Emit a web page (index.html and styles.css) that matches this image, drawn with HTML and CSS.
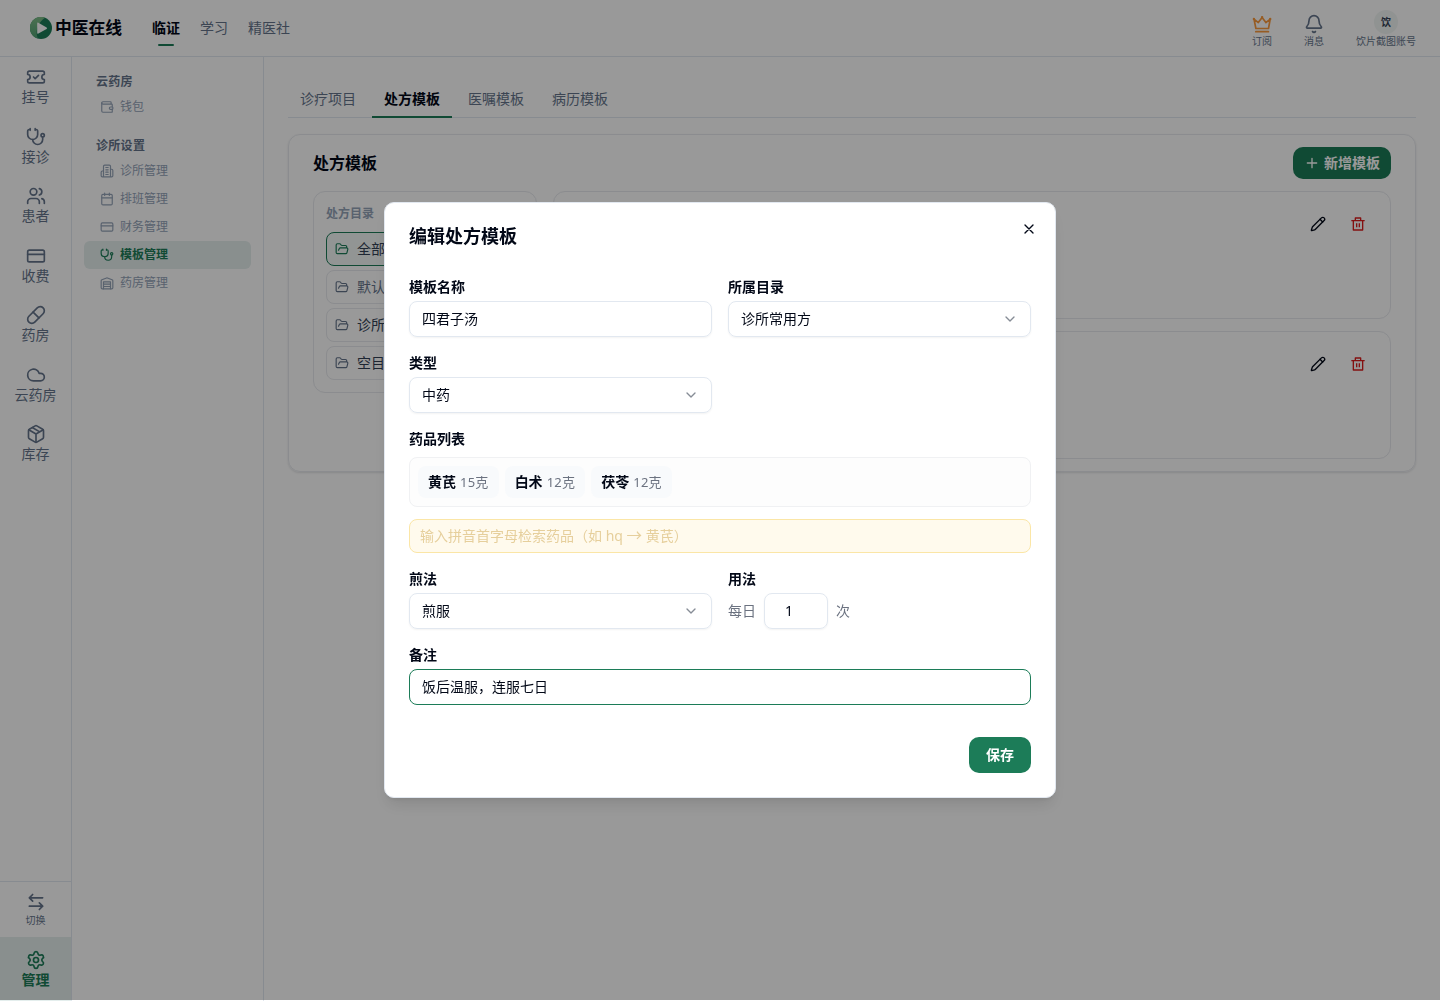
FILE: index.html
```html
<!DOCTYPE html>
<html lang="zh-CN">
<head>
<meta charset="utf-8">
<title>中医在线 - 模板管理</title>
<link rel="stylesheet" href="styles.css">
</head>
<body>
<svg class="sprite" aria-hidden="true">
  <symbol id="stethoscope" viewBox="0 0 24 24"><path d="M11 2v2M5 2v2M5 3H4a2 2 0 0 0-2 2v4a6 6 0 0 0 12 0V5a2 2 0 0 0-2-2h-1"/><path d="M8 15a6 6 0 0 0 12 0v-3"/><circle cx="20" cy="10" r="2"/></symbol>
  <symbol id="card" viewBox="0 0 24 24"><rect width="20" height="14" x="2" y="5" rx="2"/><path d="M2 10h20"/></symbol>
  <symbol id="folder" viewBox="0 0 24 24"><path d="m6 14 1.5-2.9A2 2 0 0 1 9.24 10H20a2 2 0 0 1 1.94 2.5l-1.54 6a2 2 0 0 1-1.95 1.5H4a2 2 0 0 1-2-2V5a2 2 0 0 1 2-2h3.9a2 2 0 0 1 1.69.9l.81 1.2a2 2 0 0 0 1.67.9H18a2 2 0 0 1 2 2v2"/></symbol>
  <symbol id="chevron" viewBox="0 0 24 24"><path d="m6 9 6 6 6-6"/></symbol>
  <symbol id="pencil" viewBox="0 0 24 24"><path d="M21.174 6.812a1 1 0 0 0-3.986-3.987L3.842 16.174a2 2 0 0 0-.5.83l-1.321 4.352a.5.5 0 0 0 .623.622l4.353-1.32a2 2 0 0 0 .83-.497z"/><path d="m15 5 4 4"/></symbol>
  <symbol id="trash" viewBox="0 0 24 24"><path d="M17 6H22V8H20V21C20 21.5523 19.5523 22 19 22H5C4.44772 22 4 21.5523 4 21V8H2V6H7V3C7 2.44772 7.44772 2 8 2H16C16.5523 2 17 2.44772 17 3V6ZM18 8H6V20H18V8ZM9 11H11V17H9V11ZM13 11H15V17H13V11ZM9 4V6H15V4H9Z"/></symbol>
</svg>

<div class="app">
  <header class="topbar">
    <div class="brand">
      <svg class="brand-mark" viewBox="0 0 22 22"><defs><linearGradient id="leaf" x1="0" y1="0" x2="0" y2="1"><stop offset="0" stop-color="#7fbd87"/><stop offset="1" stop-color="#4e9f72"/></linearGradient></defs><circle cx="11" cy="11" r="11" fill="#1c7c58"/><path d="M15 .8A11 11 0 1 0 8 21.6C5 16 7 6 15 .8Z" fill="url(#leaf)"/><path d="M7.2 6.4v9.4q0 1.3 1.2.7l8.2-4.6q1.1-.7 0-1.4L8.4 5.7q-1.2-.6-1.2.7Z" fill="#fff"/></svg>
      <span class="brand-name">中医在线</span>
    </div>
    <nav class="topnav">
      <a class="active">临证</a><a>学习</a><a>精医社</a>
    </nav>
    <div class="tools">
      <div class="tool"><svg class="ic s20 crown" viewBox="0 0 20 20"><path d="M2 5.2 3.9 14.5H16.5L18.2 5.2 13.9 8.6 10.1 3.4 6.3 8.6Z"/><path d="M3.8 17.7H16.4"/><path class="tips" d="M1.9 4.9h.01M10.1 3.1h.01M18.2 4.9h.01"/></svg><span>订阅</span></div>
      <div class="tool"><svg class="ic s20 bell" viewBox="0 0 24 24"><path d="M10.268 21a2 2 0 0 0 3.464 0"/><path d="M3.262 15.326A1 1 0 0 0 4 17h16a1 1 0 0 0 .74-1.673C19.41 13.956 18 12.499 18 8A6 6 0 0 0 6 8c0 4.499-1.411 5.956-2.738 7.326"/></svg><span>消息</span></div>
      <div class="tool"><b class="avatar">饮</b><span>饮片截图账号</span></div>
    </div>
  </header>

  <div class="body">
    <aside class="rail">
      <div class="rail-list">
        <a><svg class="ic s20" viewBox="0 0 24 24"><path d="M2 9a3 3 0 1 1 0 6v2a2 2 0 0 0 2 2h16a2 2 0 0 0 2-2v-2a3 3 0 1 1 0-6V7a2 2 0 0 0-2-2H4a2 2 0 0 0-2 2Z"/><path d="m9 12 2 2 4-4"/></svg>挂号</a>
        <a><svg class="ic s20"><use href="#stethoscope"/></svg>接诊</a>
        <a><svg class="ic s20" viewBox="0 0 24 24"><path d="M16 21v-2a4 4 0 0 0-4-4H6a4 4 0 0 0-4 4v2"/><circle cx="9" cy="7" r="4"/><path d="M22 21v-2a4 4 0 0 0-3-3.87M16 3.13a4 4 0 0 1 0 7.75"/></svg>患者</a>
        <a><svg class="ic s20"><use href="#card"/></svg>收费</a>
        <a><svg class="ic s20" viewBox="0 0 24 24"><path d="m10.5 20.5 10-10a4.95 4.95 0 1 0-7-7l-10 10a4.95 4.95 0 1 0 7 7Z"/><path d="m8.5 8.5 7 7"/></svg>药房</a>
        <a><svg class="ic s20" viewBox="0 0 24 24"><path d="M17.5 19H9a7 7 0 1 1 6.71-9h1.79a4.5 4.5 0 1 1 0 9Z"/></svg>云药房</a>
        <a><svg class="ic s20" viewBox="0 0 24 24"><path d="M11 21.73a2 2 0 0 0 2 0l7-4A2 2 0 0 0 21 16V8a2 2 0 0 0-1-1.73l-7-4a2 2 0 0 0-2 0l-7 4A2 2 0 0 0 3 8v8a2 2 0 0 0 1 1.73z"/><path d="M12 22V12M3.29 7 12 12l8.71-5M7.5 4.27l9 5.15"/></svg>库存</a>
      </div>
      <a class="switch"><svg class="ic s20" viewBox="0 0 24 24"><path d="M8 3 4 7l4 4M4 7h16M16 21l4-4-4-4M20 17H4"/></svg>切换</a>
      <a class="manage"><svg class="ic s20" viewBox="0 0 24 24"><path d="M9.671 4.136a2.34 2.34 0 0 1 4.659 0 2.34 2.34 0 0 0 3.319 1.915 2.34 2.34 0 0 1 2.33 4.033 2.34 2.34 0 0 0 0 3.831 2.34 2.34 0 0 1-2.33 4.033 2.34 2.34 0 0 0-3.319 1.915 2.34 2.34 0 0 1-4.659 0 2.34 2.34 0 0 0-3.32-1.915 2.34 2.34 0 0 1-2.33-4.033 2.34 2.34 0 0 0 0-3.831A2.34 2.34 0 0 1 6.35 6.051a2.34 2.34 0 0 0 3.319-1.915"/><circle cx="12" cy="12" r="3"/></svg>管理</a>
    </aside>

    <aside class="submenu">
      <h3>云药房</h3>
      <a><svg class="ic s14" viewBox="0 0 24 24"><path d="M19 7V4a1 1 0 0 0-1-1H5a2 2 0 0 0 0 4h15a1 1 0 0 1 1 1v4h-3a2 2 0 0 0 0 4h3a1 1 0 0 0 1-1v-2a1 1 0 0 0-1-1"/><path d="M3 5v14a2 2 0 0 0 2 2h15a1 1 0 0 0 1-1v-4"/></svg>钱包</a>
      <h3 class="second">诊所设置</h3>
      <a><svg class="ic s14" viewBox="0 0 24 24"><path d="M6 22V4a2 2 0 0 1 2-2h8a2 2 0 0 1 2 2v18ZM6 12H4a2 2 0 0 0-2 2v6a2 2 0 0 0 2 2h2M18 9h2a2 2 0 0 1 2 2v9a2 2 0 0 1-2 2h-2M10 6h4M10 10h4M10 14h4M10 18h4"/></svg>诊所管理</a>
      <a><svg class="ic s14" viewBox="0 0 24 24"><path d="M8 2v4M16 2v4"/><rect width="18" height="18" x="3" y="4" rx="2"/><path d="M3 10h18"/></svg>排班管理</a>
      <a><svg class="ic s14"><use href="#card"/></svg>财务管理</a>
      <a class="active"><svg class="ic s14"><use href="#stethoscope"/></svg>模板管理</a>
      <a><svg class="ic s14" viewBox="0 0 24 24"><path d="M22 8.35V20a2 2 0 0 1-2 2H4a2 2 0 0 1-2-2V8.35A2 2 0 0 1 3.26 6.5l8-3.2a2 2 0 0 1 1.48 0l8 3.2A2 2 0 0 1 22 8.35ZM6 18h12M6 14h12"/><path d="M6 22V10h12v12"/></svg>药房管理</a>
    </aside>

    <main class="main">
      <nav class="tabs"><a>诊疗项目</a><a class="active">处方模板</a><a>医嘱模板</a><a>病历模板</a></nav>
      <section class="card">
        <div class="card-head">
          <h2>处方模板</h2>
          <button class="btn add"><svg class="ic s16" viewBox="0 0 24 24"><path d="M5 12h14M12 5v14"/></svg>新增模板</button>
        </div>
        <div class="card-body">
          <div class="dirs">
            <h4>处方目录</h4>
            <a class="active"><svg class="ic s14"><use href="#folder"/></svg>全部</a>
            <a class="muted"><svg class="ic s14"><use href="#folder"/></svg>默认</a>
            <a><svg class="ic s14"><use href="#folder"/></svg>诊所</a>
            <a><svg class="ic s14"><use href="#folder"/></svg>空目</a>
          </div>
          <div class="templates">
            <div class="template"><svg class="ic s16 edit"><use href="#pencil"/></svg><svg class="s16 remove"><use href="#trash"/></svg></div>
            <div class="template"><svg class="ic s16 edit"><use href="#pencil"/></svg><svg class="s16 remove"><use href="#trash"/></svg></div>
          </div>
        </div>
      </section>
    </main>
  </div>
</div>

<div class="overlay">
  <div class="dialog" role="dialog">
    <svg class="ic s16 close" viewBox="0 0 24 24"><path d="M18 6 6 18M6 6l12 12"/></svg>
    <h2 class="dialog-title">编辑处方模板</h2>
    <div class="form">
      <div class="row">
        <div class="field"><label>模板名称</label><div class="control">四君子汤</div></div>
        <div class="field"><label>所属目录</label><div class="control">诊所常用方<svg class="ic s16 chev"><use href="#chevron"/></svg></div></div>
      </div>
      <div class="row">
        <div class="field"><label>类型</label><div class="control">中药<svg class="ic s16 chev"><use href="#chevron"/></svg></div></div>
      </div>
      <div class="field">
        <label>药品列表</label>
        <div class="herbs">
          <span class="herb"><b>黄芪</b>15克</span>
          <span class="herb"><b>白术</b>12克</span>
          <span class="herb"><b>茯苓</b>12克</span>
        </div>
        <div class="search">输入拼音首字母检索药品（如 hq <span class="arrow">→</span> 黄芪）</div>
      </div>
      <div class="row">
        <div class="field"><label>煎法</label><div class="control">煎服<svg class="ic s16 chev"><use href="#chevron"/></svg></div></div>
        <div class="field"><label>用法</label><div class="dose">每日<div class="control count">1</div>次</div></div>
      </div>
      <div class="field"><label>备注</label><div class="control focused">饭后温服，连服七日</div></div>
    </div>
    <div class="dialog-foot"><button class="btn save">保存</button></div>
  </div>
</div>
</body>
</html>
```

FILE: styles.css
```css
:root {
  --ink: #020817;
  --slate: #64748b;
  --faint: #94a3b8;
  --line: #e2e8f0;
  --soft-line: #e8eaee;
  --green: #1c7c58;
}
* { box-sizing: border-box; }
body {
  margin: 0;
  height: 1001px;
  overflow: hidden;
  background: #fff;
  color: var(--ink);
  font: 14px/20px "Noto Sans", "Noto Sans CJK SC", sans-serif;
}
h2, h3, h4 { margin: 0; }
.sprite { display: none; }
.ic { fill: none; stroke: currentColor; stroke-width: 2; stroke-linecap: round; stroke-linejoin: round; }
.s20, .s16, .s14 { display: block; flex: none; }
.s20 { width: 20px; height: 20px; }
.s16 { width: 16px; height: 16px; }
.s14 { width: 14px; height: 14px; }
.btn {
  display: flex; align-items: center; justify-content: center;
  border: 0; border-radius: 10px; padding: 0;
  background: var(--green); color: #fff;
  font: inherit; font-weight: 700;
}

.app { height: 1001px; display: flex; flex-direction: column; }
.topbar {
  height: 57px; flex: none; display: flex;
  border-bottom: 1px solid var(--line); padding: 0 24px 0 30px;
}
.brand { display: flex; align-items: center; gap: 3px; width: 122px; }
.brand-mark { width: 22px; height: 22px; flex: none; }
.brand-name { font-size: 16.8px; font-weight: 600; white-space: nowrap; }
.topnav { display: flex; gap: 20px; color: var(--slate); }
.topnav a { height: 46px; padding-top: 18px; display: flex; flex-direction: column; align-items: center; }
.topnav .active { color: var(--ink); font-weight: 700; }
.topnav .active::after { content: ""; width: 16px; height: 2px; margin-top: 6px; border-radius: 1px; background: var(--green); flex: none; }
.tools { margin-left: auto; display: flex; gap: 32px; color: var(--slate); }
.tool { display: flex; flex-direction: column; align-items: center; font-size: 10px; line-height: 14px; }
.tool .s20 { margin: 14px 0 0; }
.crown { color: #fb9a3c; stroke-width: 1.7; }
.crown .tips { stroke-width: 2.4; }
.avatar {
  width: 24px; height: 24px; margin: 10px 0 0; border-radius: 50%;
  background: #f1f5f4; color: #334155; text-align: center; line-height: 24px;
}

.body { flex: 1; display: flex; min-height: 0; }
.rail { width: 72px; flex: none; display: flex; flex-direction: column; border-right: 1px solid var(--line); color: var(--slate); }
.rail a { display: flex; flex-direction: column; align-items: center; }
.rail-list { flex: 1; padding-top: 10px; }
.rail-list a { height: 59.5px; }
.switch { height: 56px; padding-top: 10px; border-top: 1px solid var(--line); font-size: 10px; line-height: 16px; }
.manage { height: 64px; padding-top: 13px; background: #e4eeed; color: var(--green); font-weight: 600; }

.submenu { width: 192px; flex: none; border-right: 1px solid var(--line); padding: 14px 12px; font-size: 12px; }
.submenu h3 { padding-left: 12px; font-size: 12px; line-height: 21px; letter-spacing: .3px; color: var(--slate); font-weight: 600; margin-bottom: 1px; }
.submenu h3.second { margin-top: 14px; }
.submenu a { height: 28px; display: flex; align-items: center; gap: 6px; padding-left: 16px; border-radius: 6px; color: var(--faint); }
.submenu .active { background: #e4eeed; color: var(--green); font-weight: 600; }

.main { flex: 1; padding: 24px; min-width: 0; }
.tabs { display: flex; gap: 4px; height: 37px; border-bottom: 1px solid var(--line); color: var(--slate); }
.tabs a { padding: 8px 12px 0; height: 37px; }
.tabs .active { color: var(--ink); font-weight: 600; border-bottom: 2px solid var(--green); }
.card { margin-top: 16px; height: 338px; border: 1px solid var(--soft-line); border-radius: 12px; padding: 12px 24px; box-shadow: 0 1px 2px rgba(15, 23, 42, .12); }
.card-head { display: flex; align-items: center; justify-content: space-between; height: 32px; margin-bottom: 12px; }
.card-head h2 { font-size: 16px; font-weight: 600; }
.add { width: 98px; height: 32px; gap: 4px; }
.card-body { display: flex; align-items: flex-start; gap: 16px; }
.dirs { width: 224px; height: 202px; flex: none; border: 1px solid var(--soft-line); border-radius: 12px; padding: 12px; display: flex; flex-direction: column; gap: 4px; }
.dirs h4 { font-size: 12px; font-weight: 600; line-height: 20px; height: 24px; color: var(--faint); }
.dirs a { height: 34px; border: 1px solid var(--soft-line); border-radius: 8px; display: flex; align-items: center; gap: 8px; padding-left: 8px; color: #334155; }
.dirs svg { color: var(--slate); }
.dirs .muted { color: var(--slate); }
.dirs .active { border-color: var(--green); background: #f3f8f7; }
.dirs .active svg { color: var(--green); }
.templates { flex: 1; display: flex; flex-direction: column; gap: 12px; }
.template { height: 128px; border: 1px solid var(--soft-line); border-radius: 12px; padding: 24px; display: flex; justify-content: flex-end; gap: 24px; }
.remove { fill: #dc1c1c; }

.overlay {
  position: fixed; inset: 0 0 auto; height: 1000px;
  display: flex; align-items: center; justify-content: center;
  background: rgba(0, 0, 0, .4);
}
.dialog {
  position: relative; width: 672px; height: 596px; padding: 24px;
  background: #fff; border: 1px solid var(--line); border-radius: 10px;
  box-shadow: 0 10px 15px -3px rgba(0, 0, 0, .1), 0 4px 6px -4px rgba(0, 0, 0, .1);
}
.close { position: absolute; right: 18px; top: 18px; }
.dialog-title { font-size: 18px; font-weight: 600; line-height: 18px; height: 50px; }
.form { display: flex; flex-direction: column; gap: 16px; }
.row { display: grid; grid-template-columns: 1fr 1fr; gap: 16px; }
.field label { display: block; height: 20px; margin-bottom: 4px; font-weight: 600; }
.control {
  height: 36px; display: flex; align-items: center; justify-content: space-between; padding: 0 12px;
  border: 1px solid var(--line); border-radius: 8px; box-shadow: 0 1px 2px rgba(0, 0, 0, .05);
}
.chev { color: #868c96; }
.focused { border-color: var(--green); box-shadow: none; }
.herbs { height: 50px; margin-top: 8px; padding: 8px; border: 1px solid #f0f1f3; border-radius: 8px; background: #fdfdfd; display: flex; gap: 6px; }
.herb { height: 32px; padding: 0 10px; border-radius: 8px; background: #f8fafc; color: #6b7280; font-size: 13px; letter-spacing: .25px; display: flex; align-items: center; gap: 4px; }
.herb b { color: var(--ink); font-size: 14px; font-weight: 600; letter-spacing: 0; }
.search { height: 34px; margin-top: 12px; padding: 0 10px; border: 1px solid #fbe6a6; border-radius: 8px; background: #fffaed; color: #e6cf9c; line-height: 32px; }
.arrow { font-size: 15.5px; line-height: 20px; }
.dose { display: flex; align-items: center; gap: 8px; color: #6b7280; }
.count { width: 64px; padding-left: 20px; color: var(--ink); }
.dialog-foot { margin-top: 32px; display: flex; justify-content: flex-end; }
.save { width: 62px; height: 36px; }
```
